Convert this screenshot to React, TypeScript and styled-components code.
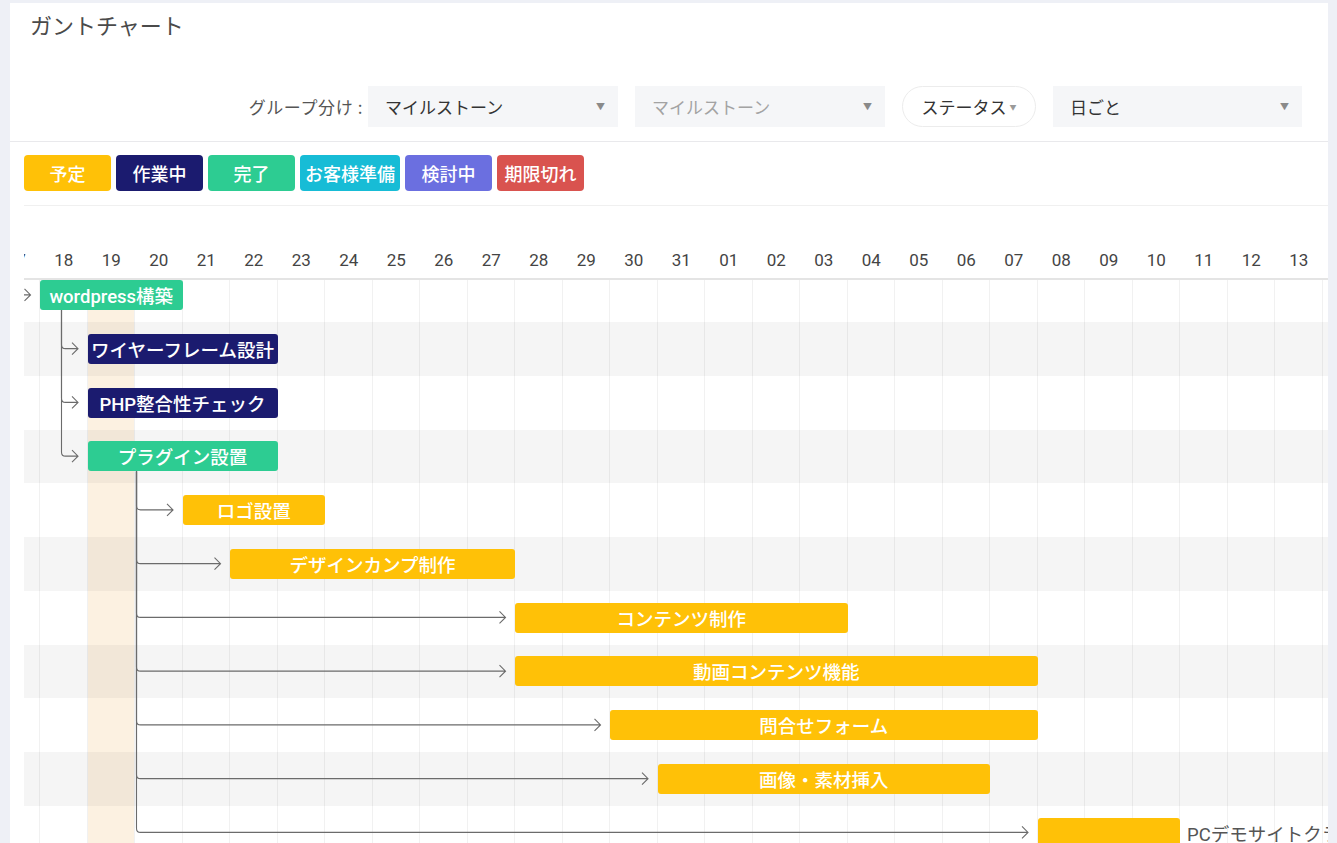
import React, { FC } from 'react';
import styled, { createGlobalStyle } from 'styled-components';

const COL = 47.5;
const ROW = 53.75;
const TODAY = 2;

const GlobalStyle = createGlobalStyle`
    html, body {
        margin: 0;
        padding: 0;
        overflow: hidden;
        background: #eef0f6;
    }
    body {
        font-family: Roboto, 'Noto Sans CJK JP', sans-serif;
    }
`;

const Page = styled.div`
    padding: 3px 9px 0 10px;
    height: 843px;
    box-sizing: border-box;
`;

const Card = styled.div`
    background: #fff;
    height: 100%;
    display: flex;
    flex-direction: column;
`;

const Title = styled.h1`
    margin: 0;
    padding: 7px 20px 0;
    font-size: 22px;
    line-height: 28px;
    font-weight: 400;
    color: #4a4a4a;
    font-family: 'Noto Sans CJK JP', sans-serif;
`;

const FilterBar = styled.div`
    display: flex;
    justify-content: flex-end;
    align-items: center;
    gap: 17px;
    margin-top: 48px;
    padding: 0 26px 14px 0;
    border-bottom: 1px solid #e9e9ec;
    font-family: 'Noto Sans CJK JP', sans-serif;
`;

const FilterLabel = styled.span`
    font-size: 17px;
    letter-spacing: 0.6px;
    color: #555;
    margin-right: -12px;
`;

const Select = styled.div<{ $width: number; $placeholder?: boolean }>`
    width: ${(p) => p.$width}px;
    height: 41px;
    box-sizing: border-box;
    background: #f5f6f8;
    display: flex;
    align-items: center;
    justify-content: space-between;
    padding: 0 13px 0 17px;
    font-size: 17px;
    color: ${(p) => (p.$placeholder ? '#a3a3a3' : '#333')};
`;

const Caret = styled.span<{ $small?: boolean }>`
    font-size: ${(p) => (p.$small ? 7 : 9)}px;
    color: ${(p) => (p.$small ? '#9a9a9a' : '#8a8a8a')};
`;

const StatusButton = styled.div`
    width: 134px;
    height: 41px;
    box-sizing: border-box;
    border: 1px solid #ececec;
    border-radius: 21px;
    display: flex;
    align-items: center;
    justify-content: center;
    gap: 3px;
    font-size: 17px;
    color: #333;
`;

const Legend = styled.div`
    display: flex;
    gap: 5px;
    padding: 13px 14px 14px;
`;

const LegendButton = styled.div<{ $color: string }>`
    min-width: 87px;
    height: 36px;
    padding: 0 5px;
    box-sizing: border-box;
    border-radius: 4px;
    background: ${(p) => p.$color};
    color: #fff;
    font-size: 18px;
    font-weight: 500;
    display: flex;
    align-items: center;
    justify-content: center;
    font-family: 'Noto Sans CJK JP', sans-serif;
`;

const ChartClip = styled.div`
    margin-left: 14px;
    border-top: 1px solid #f0f0f0;
    overflow: hidden;
    flex: 1;
    display: flex;
    flex-direction: column;
`;

const Track = styled.div<{ $cols: number }>`
    margin-left: -31.5px;
    width: ${(p) => p.$cols * COL}px;
    display: flex;
    flex-direction: column;
    flex: 1;
    min-height: 0;
`;

const HeaderRow = styled.div`
    display: flex;
    margin-top: 35px;
    border-bottom: 2px solid #e4e4e4;
`;

const DayCell = styled.div`
    width: ${COL}px;
    flex: none;
    height: 37px;
    display: flex;
    align-items: center;
    justify-content: center;
    font-size: 17px;
    color: #444;
`;

const BodyClip = styled.div`
    flex: 1;
    overflow: hidden;
    min-height: 0;
`;

const Body = styled.div`
    position: relative;
    margin-top: -11.75px;
`;

const ColumnGrid = styled.div`
    position: absolute;
    inset: 0;
    display: flex;
    z-index: 0;
`;

const GridCol = styled.div<{ $today: boolean }>`
    width: ${COL}px;
    flex: none;
    box-sizing: border-box;
    border-right: 1px solid #f1f1f1;
    background: ${(p) => (p.$today ? '#fcf1e1' : 'transparent')};
`;

const Row = styled.div<{ $striped: boolean }>`
    position: relative;
    z-index: 1;
    height: ${ROW}px;
    display: flex;
    align-items: center;
    background: ${(p) => (p.$striped ? 'rgba(0, 0, 0, 0.04)' : 'transparent')};
`;

const Bar = styled.div<{ $color: string; $start: number; $span: number }>`
    flex: none;
    margin-left: ${(p) => p.$start * COL}px;
    width: ${(p) => p.$span * COL}px;
    height: 30px;
    border-radius: 3px;
    background: ${(p) => p.$color};
    color: #fff;
    font-size: 18.5px;
    font-weight: 500;
    display: flex;
    align-items: center;
    justify-content: center;
    white-space: nowrap;
    position: relative;
    z-index: 3;
`;

const OuterLabel = styled.span`
    margin-left: 7px;
    font-size: 18.5px;
    color: #555;
    white-space: nowrap;
`;

const Links = styled.svg`
    position: absolute;
    left: 0;
    top: 0;
    z-index: 2;
    pointer-events: none;
`;

const C = {
    plan: '#ffc107',
    doing: '#1b1b6f',
    done: '#2dcc92',
    client: '#17bcd6',
    review: '#6b6fe0',
    late: '#d9534f',
};

const legend = [
    { label: '予定', color: C.plan },
    { label: '作業中', color: C.doing },
    { label: '完了', color: C.done },
    { label: 'お客様準備', color: C.client },
    { label: '検討中', color: C.review },
    { label: '期限切れ', color: C.late },
];

const days = [
    ...Array.from({ length: 15 }, (_, i) => String(17 + i)),
    ...Array.from({ length: 14 }, (_, i) => String(i + 1).padStart(2, '0')),
];

type Task = { label: string; start: number; span: number; color: string; outside?: boolean };

const tasks: Task[] = [
    { label: 'wordpress構築', start: 1, span: 3, color: C.done },
    { label: 'ワイヤーフレーム設計', start: 2, span: 4, color: C.doing },
    { label: 'PHP整合性チェック', start: 2, span: 4, color: C.doing },
    { label: 'プラグイン設置', start: 2, span: 4, color: C.done },
    { label: 'ロゴ設置', start: 4, span: 3, color: C.plan },
    { label: 'デザインカンプ制作', start: 5, span: 6, color: C.plan },
    { label: 'コンテンツ制作', start: 11, span: 7, color: C.plan },
    { label: '動画コンテンツ機能', start: 11, span: 11, color: C.plan },
    { label: '問合せフォーム', start: 13, span: 9, color: C.plan },
    { label: '画像・素材挿入', start: 14, span: 7, color: C.plan },
    { label: 'PCデモサイトクライアント確認', start: 22, span: 3, color: C.plan, outside: true },
];

const rowMid = (i: number) => i * ROW + ROW / 2;

// parent bar bottom -> child rows
const groups = [
    { x: 68.5, from: 0, children: [1, 2, 3] },
    { x: 143.5, from: 3, children: [4, 5, 6, 7, 8, 9, 10] },
];

const branch = (x: number, y0: number, y: number, tip: number) =>
    `M ${x} ${y0} V ${y - 4} Q ${x} ${y} ${x + 4} ${y} H ${tip} M ${tip - 6} ${y - 6} L ${tip} ${y} L ${tip - 6} ${y + 6}`;

const GanttLinks: FC<{ width: number; height: number }> = ({ width, height }) => {
    const paths: string[] = [];
    groups.forEach((g) => {
        const y0 = rowMid(g.from) + 15;
        g.children.forEach((c) => {
            paths.push(branch(g.x, y0, rowMid(c), tasks[c].start * COL - 10));
        });
    });
    const tip0 = tasks[0].start * COL - 10;
    const y = rowMid(0);
    paths.push(`M 0 ${y} H ${tip0} M ${tip0 - 6} ${y - 6} L ${tip0} ${y} L ${tip0 - 6} ${y + 6}`);
    return (
        <Links width={width} height={height}>
            {paths.map((d, i) => (
                <path key={i} d={d} fill="none" stroke="#6b6b6b" strokeWidth={1.1} />
            ))}
        </Links>
    );
};

const App: FC = () => {
    const rows = [...tasks, null];
    return (
        <Page>
            <GlobalStyle />
            <Card>
                <Title>ガントチャート</Title>
                <FilterBar>
                    <FilterLabel>グループ分け :</FilterLabel>
                    <Select $width={250}>
                        マイルストーン<Caret>▼</Caret>
                    </Select>
                    <Select $width={250} $placeholder>
                        マイルストーン<Caret>▼</Caret>
                    </Select>
                    <StatusButton>
                        ステータス<Caret $small>▼</Caret>
                    </StatusButton>
                    <Select $width={249}>
                        日ごと<Caret>▼</Caret>
                    </Select>
                </FilterBar>
                <Legend>
                    {legend.map((l) => (
                        <LegendButton key={l.label} $color={l.color}>
                            {l.label}
                        </LegendButton>
                    ))}
                </Legend>
                <ChartClip>
                    <Track $cols={days.length}>
                        <HeaderRow>
                            {days.map((d) => (
                                <DayCell key={d}>{d}</DayCell>
                            ))}
                        </HeaderRow>
                        <BodyClip>
                            <Body>
                                <ColumnGrid>
                                    {days.map((d, i) => (
                                        <GridCol key={d} $today={i === TODAY} />
                                    ))}
                                </ColumnGrid>
                                <GanttLinks width={days.length * COL} height={rows.length * ROW} />
                                {rows.map((t, i) => (
                                    <Row key={i} $striped={i % 2 === 1}>
                                        {t && (
                                            <>
                                                <Bar $color={t.color} $start={t.start} $span={t.span}>
                                                    {t.outside ? '' : t.label}
                                                </Bar>
                                                {t.outside && <OuterLabel>{t.label}</OuterLabel>}
                                            </>
                                        )}
                                    </Row>
                                ))}
                            </Body>
                        </BodyClip>
                    </Track>
                </ChartClip>
            </Card>
        </Page>
    );
};

export default App;
